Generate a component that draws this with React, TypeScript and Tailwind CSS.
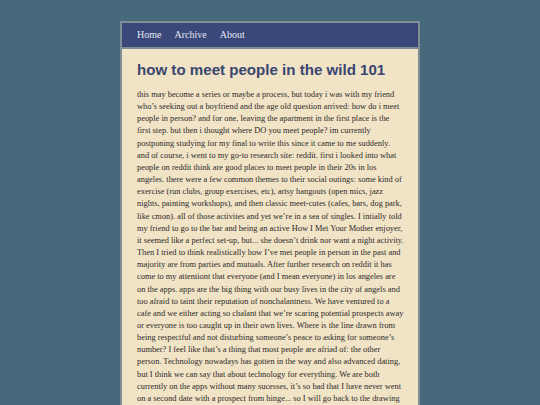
const lines = [
  "this may become a series or maybe a process, but today i was with my friend",
  "who’s seeking out a boyfriend and the age old question arrived: how do i meet",
  "people in person? and for one, leaving the apartment in the first place is the",
  "first step. but then i thought where DO you meet people? im currently",
  "postponing studying for my final to write this since it came to me suddenly.",
  "and of course, i went to my go-to research site: reddit. first i looked into what",
  "people on reddit think are good places to meet people in their 20s in los",
  "angeles. there were a few common themes to their social outings: some kind of",
  "exercise (run clubs, group exercises, etc), artsy hangouts (open mics, jazz",
  "nights, painting workshops), and then classic meet-cutes (cafes, bars, dog park,",
  "like cmon). all of those activites and yet we’re in a sea of singles. I intially told",
  "my friend to go to the bar and being an active How I Met Your Mother enjoyer,",
  "it seemed like a perfect set-up, but... she doesn’t drink nor want a night activity.",
  "Then I tried to think realistically how I’ve met people in person in the past and",
  "majority are from parties and mutuals. After further research on reddit it has",
  "come to my attentiont that everyone (and I mean everyone) in los angeles are",
  "on the apps. apps are the big thing with our busy lives in the city of angels and",
  "too afraid to taint their reputation of nonchalantness. We have ventured to a",
  "cafe and we either acting so chalant that we’re scaring potential prospects away",
  "or everyone is too caught up in their own lives. Where is the line drawn from",
  "being respectful and not disturbing someone’s peace to asking for someone’s",
  "number? I feel like that’s a thing that most people are afriad of: the other",
  "person. Technology nowadays has gotten in the way and also advanced dating,",
  "but I think we can say that about technology for everything. We are both",
  "currently on the apps without many sucesses, it’s so bad that I have never went",
  "on a second date with a prospect from hinge... so I will go back to the drawing",
];

export default function App() {
  return (
    <div className="h-screen overflow-hidden bg-[#46697b] pt-[21px]">
      <div className="mx-auto w-[300px] border-2 border-[#7f8d94] bg-[#f1e3c6]">
        <nav className="flex gap-[13px] bg-[#394779] border-b-2 border-[#7f8d94] px-[15px] pt-[4px] pb-[5px] font-['Liberation_Serif',serif] text-[10px] text-[#e6e8f4]">
          <a href="#">Home</a>
          <a href="#">Archive</a>
          <a href="#">About</a>
        </nav>
        <article className="px-[15px] pt-[12px] pb-6">
          <h1 className="font-['Liberation_Sans',Arial,sans-serif] text-[15.1px] font-bold leading-[18px] text-[#3a4670]">
            how to meet people in the wild 101
          </h1>
          <div className="mt-[10px] font-['Liberation_Serif',serif] text-[8.4px] leading-[12.15px] text-[#2c2b29]">
            {lines.map((l, i) => (
              <div key={i} className="whitespace-nowrap">
                {l}
              </div>
            ))}
          </div>
        </article>
      </div>
    </div>
  );
}
